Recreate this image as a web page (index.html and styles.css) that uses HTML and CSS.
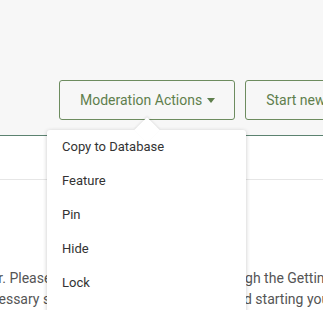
FILE: index.html
```html
<!DOCTYPE html>
<html lang="en">
<head>
    <meta charset="UTF-8">
    <meta name="viewport" content="width=device-width, initial-scale=1.0">
    <title>Topic</title>
    <link rel="stylesheet" href="styles.css">
</head>
<body>
    <div class="header">
        <div class="toolbar">
            <div class="dropdown">
                <button class="btn">Moderation Actions<span class="caret"></span></button>
                <ul class="menu">
                    <li>Copy to Database</li>
                    <li>Feature</li>
                    <li>Pin</li>
                    <li>Hide</li>
                    <li>Lock</li>
                    <li>Move</li>
                    <li>Delete</li>
                </ul>
            </div>
            <button class="btn">Start new topic</button>
        </div>
    </div>
    <div class="tabs"></div>
    <div class="content">
        <p class="intro">
            <span class="line">user. Please take a moment to glance through the Getting Started guide</span>
            <span class="line">necessary steps before reading to posts and starting your first topic.</span>
        </p>
    </div>
</body>
</html>
```

FILE: styles.css
```css
body {
    margin: 0;
    width: 323px;
    height: 310px;
    overflow: hidden;
    font-family: Roboto, "Liberation Sans", sans-serif;
    background-color: #fff;
}
.header {
    height: 135px;
    background-color: #f7f7f7;
    border-bottom: 1px solid #5b8270;
}
.toolbar {
    display: flex;
    gap: 10px;
    padding: 80px 0 0 59px;
}
.dropdown {
    position: relative;
    flex-shrink: 0;
}
.btn {
    flex-shrink: 0;
    height: 40px;
    padding: 0 19px 0 20px;
    font-family: inherit;
    font-size: 14px;
    color: #5f7f4d;
    background-color: #f7f7f7;
    border: 1px solid #6d8c5f;
    border-radius: 3px;
    white-space: nowrap;
    display: flex;
    align-items: center;
}
.caret {
    display: inline-block;
    width: 0;
    height: 0;
    margin-left: 5px;
    border-left: 4px solid transparent;
    border-right: 4px solid transparent;
    border-top: 5px solid #5f7f4d;
}
.menu {
    position: absolute;
    top: 50px;
    left: -12px;
    width: 199px;
    margin: 0;
    padding: 0;
    list-style: none;
    background-color: #fff;
    border-radius: 3px;
    box-shadow: 0 1px 4px rgba(0, 0, 0, .22);
    z-index: 2;
}
.menu::before {
    content: "";
    position: absolute;
    top: -9px;
    left: 91px;
    width: 18px;
    height: 18px;
    background-color: #fff;
    transform: rotate(45deg);
    box-shadow: -1px -1px 2px rgba(0, 0, 0, .08);
}
.menu li {
    position: relative;
    height: 34px;
    line-height: 34px;
    padding-left: 15px;
    font-size: 13px;
    color: #333;
}
.tabs {
    height: 43px;
    border-bottom: 1px solid #e6e6e6;
}
.content {
    padding-top: 88px;
}
.intro {
    margin: 0 0 0 -24px;
    font-size: 14px;
    line-height: 21px;
    color: #555;
    white-space: nowrap;
}
.line {
    display: block;
}
```
